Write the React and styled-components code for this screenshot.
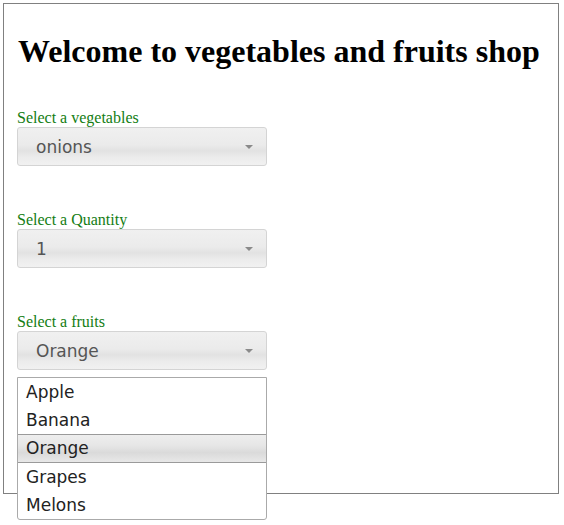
import styled, { createGlobalStyle } from "styled-components";

const GlobalStyle = createGlobalStyle`
	html, body {
		margin: 0;
		padding: 0;
		background: #fff;
	}
	body {
		font-family: "Liberation Serif", "Times New Roman", serif;
	}
`;

const Page = styled.div`
	position: relative;
	height: 525px;
	padding: 3px 0 0 3px;
	box-sizing: border-box;
`;

const Shop = styled.div`
	width: 556px;
	height: 491px;
	border: 1px solid #808080;
	box-sizing: border-box;
	padding: 29px 13px 0 13px;
`;

const Title = styled.h1`
	margin: 0 0 39px 1px;
	font-family: "Liberation Serif", "Times New Roman", serif;
	font-size: 32px;
	font-weight: bold;
	line-height: 37px;
	color: #000;
	white-space: nowrap;
`;

const Field = styled.div`
	display: flex;
	flex-direction: column;
	align-items: flex-start;
	margin-bottom: 45px;
`;

const Label = styled.label`
	font-family: "Liberation Serif", "Times New Roman", serif;
	font-size: 16px;
	line-height: 18px;
	color: #137d13;
`;

const SelectBox = styled.div`
	display: flex;
	align-items: center;
	justify-content: space-between;
	width: 250px;
	height: 39px;
	box-sizing: border-box;
	padding: 0 13px 0 18px;
	border: 1px solid #d4d4d4;
	border-radius: 3px;
	background: linear-gradient(#f0f0f0 0%, #ebebeb 45%, #e2e2e2 62%, #ececec 80%, #f1f1f1 100%);
	font-family: "DejaVu Sans", Verdana, sans-serif;
	font-size: 17px;
	color: #555;
`;

const Caret = styled.span`
	width: 0;
	height: 0;
	border-left: 4px solid transparent;
	border-right: 4px solid transparent;
	border-top: 4px solid #8a8a8a;
	margin-top: 1px;
`;

const Menu = styled.ul`
	position: absolute;
	left: 17px;
	top: 377px;
	width: 250px;
	margin: 0;
	padding: 0;
	list-style: none;
	box-sizing: border-box;
	border: 1px solid #aaa;
	border-radius: 0 0 3px 3px;
	background: #fff;
	font-family: "DejaVu Sans", Verdana, sans-serif;
	font-size: 17px;
	color: #222;
	z-index: 2;
`;

const Option = styled.li`
	height: 28px;
	line-height: 28px;
	padding-left: 8px;
	box-sizing: border-box;
	${p => p.$active && `
		height: 29px;
		line-height: 27px;
		border-top: 1px solid #9a9a9a;
		border-bottom: 1px solid #9a9a9a;
		background: linear-gradient(#eeeeee 0%, #e6e6e6 40%, #dadada 65%, #e8e8e8 100%);
	`}
`;

const fruits = ["Apple", "Banana", "Orange", "Grapes", "Melons"];

function Select({label, value}) {
	return (
		<Field>
			<Label>{label}</Label>
			<SelectBox>
				<span>{value}</span>
				<Caret />
			</SelectBox>
		</Field>
	);
}

export default function App() {
	return (
		<Page>
			<GlobalStyle />
			<Shop>
				<Title>Welcome to vegetables and fruits shop</Title>
				<Select label="Select a vegetables" value="onions" />
				<Select label="Select a Quantity" value="1" />
				<Select label="Select a fruits" value="Orange" />
			</Shop>
			<Menu>
				{fruits.map(f => (
					<Option key={f} $active={f === "Orange"}>{f}</Option>
				))}
			</Menu>
		</Page>
	);
}
